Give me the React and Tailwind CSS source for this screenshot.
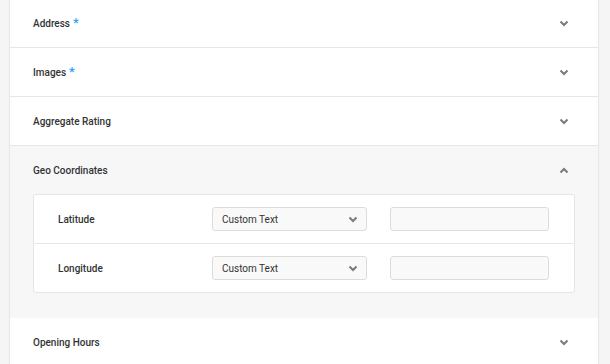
const Chevron = ({ up = false, className = '' }) => (
  <svg
    width="10"
    height="7"
    viewBox="0 0 10 7"
    className={className}
    style={{ transform: up ? 'rotate(180deg)' : undefined }}
  >
    <polyline points="1.5,1.5 5,5 8.5,1.5" fill="none" stroke="#7a7a7a" strokeWidth="2" />
  </svg>
)

function Row({ label, required, bg = 'bg-white' }) {
  return (
    <div className={`flex h-[49px] items-center justify-between border-b border-[#e6e6e6] pl-[23px] pr-[29px] ${bg}`}>
      <span className="text-[10px] font-medium text-[#333]">
        {label}
        {required ? <span className="ml-[3px] text-[13px] leading-none text-[#2ea3f2]">*</span> : null}
      </span>
      <Chevron />
    </div>
  )
}

function Field({ label, last }) {
  return (
    <div className={`flex items-center pl-6 ${last ? 'h-12' : 'h-[49px] border-b border-[#e6e6e6]'}`}>
      <span className="w-[154px] text-[10px] font-medium text-[#333]">{label}</span>
      <div className="flex h-6 w-[155px] items-center justify-between rounded-[3px] border border-[#dcdcdc] bg-[#f9f9f9] pl-[9px] pr-[8px]">
        <span className="text-[10px] text-[#333]">Custom Text</span>
        <Chevron />
      </div>
      <div className="ml-[23px] h-6 w-[159px] rounded-[3px] border border-[#dcdcdc] bg-[#f9f9f9]" />
    </div>
  )
}

export default function App() {
  return (
    <div
      className="h-[364px] overflow-hidden bg-[#f5f5f5] pl-[9px] pr-[11px]"
      style={{ fontFamily: 'Roboto, "Liberation Sans", sans-serif' }}
    >
      <div className="-mt-px h-[366px] border-x border-[#e6e6e6] bg-white">
        <Row label="Address" required />
        <Row label="Images" required />
        <Row label="Aggregate Rating" />
        <div className="bg-[#f7f7f7] px-[23px] pb-[25px]">
          <div className="flex h-12 items-center justify-between pr-[6px]">
            <span className="text-[10px] font-medium text-[#333]">Geo Coordinates</span>
            <Chevron up />
          </div>
          <div className="rounded-[3px] border border-[#e6e6e6] bg-white">
            <Field label="Latitude" />
            <Field label="Longitude" last />
          </div>
        </div>
        <Row label="Opening Hours" />
      </div>
    </div>
  )
}
